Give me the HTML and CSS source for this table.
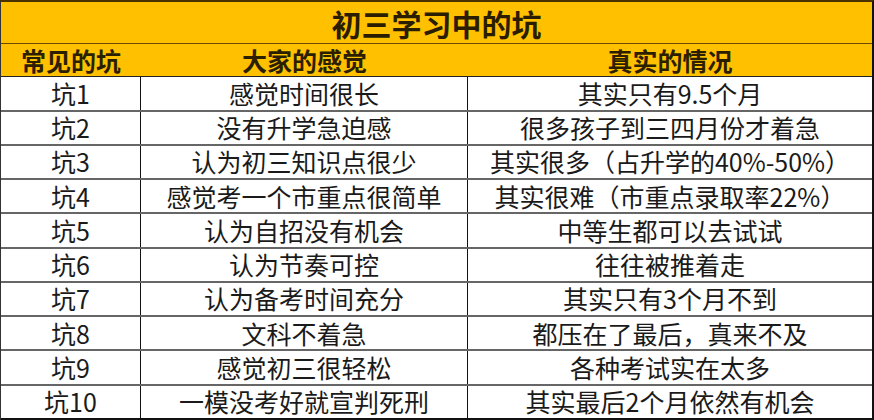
FILE: index.html
```html
<!DOCTYPE html>
<html lang="zh">
<head>
<meta charset="utf-8">
<link rel="stylesheet" href="styles.css">
</head>
<body>
<div class="pit-table">
  <div class="title-row">初三学习中的坑</div>
  <div class="row head-row"><div class="cell">常见的坑</div><div class="cell">大家的感觉</div><div class="cell">真实的情况</div></div>
  <div class="row"><div class="cell">坑1</div><div class="cell">感觉时间很长</div><div class="cell">其实只有9.5个月</div></div>
  <div class="row"><div class="cell">坑2</div><div class="cell">没有升学急迫感</div><div class="cell">很多孩子到三四月份才着急</div></div>
  <div class="row"><div class="cell">坑3</div><div class="cell">认为初三知识点很少</div><div class="cell">其实很多（占升学的40%-50%）</div></div>
  <div class="row"><div class="cell">坑4</div><div class="cell">感觉考一个市重点很简单</div><div class="cell">其实很难（市重点录取率22%）</div></div>
  <div class="row"><div class="cell">坑5</div><div class="cell">认为自招没有机会</div><div class="cell">中等生都可以去试试</div></div>
  <div class="row"><div class="cell">坑6</div><div class="cell">认为节奏可控</div><div class="cell">往往被推着走</div></div>
  <div class="row"><div class="cell">坑7</div><div class="cell">认为备考时间充分</div><div class="cell">其实只有3个月不到</div></div>
  <div class="row"><div class="cell">坑8</div><div class="cell">文科不着急</div><div class="cell">都压在了最后，真来不及</div></div>
  <div class="row"><div class="cell">坑9</div><div class="cell">感觉初三很轻松</div><div class="cell">各种考试实在太多</div></div>
  <div class="row last"><div class="cell">坑10</div><div class="cell">一模没考好就宣判死刑</div><div class="cell">其实最后2个月依然有机会</div></div>
</div>
</body>
</html>
```
FILE: styles.css
```css
html, body {
  margin: 0;
  padding: 0;
  background: #ffffff;
}
.pit-table {
  box-sizing: border-box;
  width: 874px;
  height: 420px;
  display: flex;
  flex-direction: column;
  font-family: "Noto Sans CJK SC", "Noto Sans", sans-serif;
  color: #1a1a1a;
  border-left: 1px solid #333;
  border-right: 2px solid #111;
  border-top: 2px solid #4a3200;
}
.title-row {
  box-sizing: border-box;
  height: 42px;
  flex: none;
  background: #ffc000;
  border-bottom: 1px solid #6b4a00;
  display: flex;
  align-items: center;
  justify-content: center;
  font-size: 30px;
  font-weight: 700;
  color: #2a1d00;
  line-height: 1;
}
.row {
  box-sizing: border-box;
  flex: 1 1 0;
  display: grid;
  grid-template-columns: 140px 327px 1fr;
  border-bottom: 2px solid #666;
  min-height: 0;
}
.row.last {
  border-bottom: 2px solid #111;
}
.cell {
  display: flex;
  align-items: center;
  justify-content: center;
  font-size: 25px;
  line-height: 1;
  white-space: nowrap;
  border-right: 1.5px solid #111;
  overflow: visible;
}
.cell:last-child {
  border-right: none;
}
.head-row {
  background: #ffc000;
  border-bottom: 1px solid #222;
}
.head-row .cell {
  border-right: none;
  font-weight: 700;
  font-size: 25px;
  color: #2b1f00;
}
```
